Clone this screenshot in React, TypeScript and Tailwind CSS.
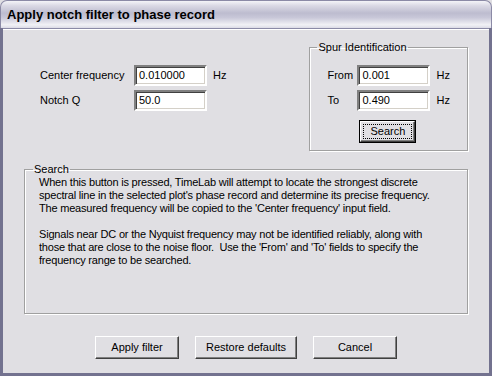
import React from "react";

const inputCls =
    "h-[21px] w-[73px] bg-white border-2 border-t-[#808080] border-l-[#808080] border-b-white border-r-white shadow-[inset_1px_1px_0_#404040,inset_-1px_-1px_0_#d4d0c8] px-[3px] flex items-center text-black";

const buttonCls =
    "h-[23px] bg-[#e0dfe3] border border-t-white border-l-white border-b-[#404040] border-r-[#404040] shadow-[inset_-1px_-1px_0_#808080] flex items-center justify-center text-black";

const etched =
    "border border-[#a0a0a0] shadow-[inset_1px_1px_0_#fff,1px_1px_0_#fff]";

const Field = ({ label, value, labelW }: { label: string; value: string; labelW: string }) => (
    <div className="flex items-center">
        <span className={labelW}>{label}</span>
        <div className={inputCls}>{value}</div>
        <span className="ml-[6px]">Hz</span>
    </div>
);

export default function App() {
    return (
        <div className="w-[492px] h-[376px] bg-[#e0dfe3] font-['Liberation_Sans',Arial,sans-serif] text-[11px] leading-[13px] text-black flex flex-col">
            {/* title bar */}
            <div className="h-[28px] rounded-t-[7px] border border-b-0 border-[#8b8aa6] bg-[linear-gradient(to_bottom,#f4f4f8_0%,#d9d8e4_18%,#bdbccf_45%,#c9c8d9_62%,#f1f1f5_88%,#dcdbe6_100%)] flex items-center pl-[6px] pb-[1px]">
                <span className="text-[13px] font-bold text-black">Apply notch filter to phase record</span>
            </div>
            {/* body */}
            <div className="flex-1 border-x-[3px] border-b-[3px] border-[#73728f] flex flex-col">
                <div className="flex-1 border-t border-[#8b8aa6] flex flex-col">
                    <div className="flex-1 border-t border-white flex flex-col">
                        {/* top area */}
                        <div className="flex h-[129px]">
                            <div className="ml-[37px] mt-[35px] flex flex-col gap-[4px]">
                                <div className="flex items-center">
                                    <span className="w-[94px]">Center frequency</span>
                                    <div className={inputCls}>0.010000</div>
                                    <span className="ml-[6px]">Hz</span>
                                </div>
                                <div className="flex items-center">
                                    <span className="w-[94px]">Notch Q</span>
                                    <div className={inputCls}>50.0</div>
                                </div>
                            </div>
                            <fieldset className={`ml-[83px] mt-[11px] w-[156px] h-[110px] ${etched} px-[17px]`}>
                                <legend className="ml-[-10px] px-[1px]">Spur Identification</legend>
                                <div className="mt-[11px] flex flex-col gap-[4px]">
                                    <Field label="From" value="0.001" labelW="w-[30px]" />
                                    <Field label="To" value="0.490" labelW="w-[30px]" />
                                </div>
                                <div className="mt-[9px] ml-[32px] w-[57px] h-[23px] border border-black flex">
                                    <div className="flex-1 border border-t-white border-l-white border-b-[#404040] border-r-[#404040] shadow-[inset_-1px_-1px_0_#808080] flex p-[2px]">
                                        <div className="flex-1 border border-dotted border-black flex items-center justify-center">Search</div>
                                    </div>
                                </div>
                            </fieldset>
                        </div>
                        {/* search group */}
                        <fieldset className={`ml-[21px] mr-[21px] mt-[4px] h-[151px] ${etched} pl-[14px] pr-[4px]`}>
                            <legend className="ml-[-6px] px-[1px]">Search</legend>
                            <p className="tracking-[-0.2px] whitespace-nowrap">
                                When this button is pressed, TimeLab will attempt to locate the strongest discrete<br />
                                spectral line in the selected plot's phase record and determine its precise frequency.<br />
                                The measured frequency will be copied to the 'Center frequency' input field.
                            </p>
                            <p className="mt-[13px] tracking-[-0.2px] whitespace-nowrap">
                                Signals near DC or the Nyquist frequency may not be identified reliably, along with<br />
                                those that are close to the noise floor.&nbsp; Use the 'From' and 'To' fields to specify the<br />
                                frequency range to be searched.
                            </p>
                        </fieldset>
                        {/* buttons */}
                        <div className="flex justify-center gap-[16px] mt-[22px]">
                            <div className={`${buttonCls} w-[84px]`}>Apply filter</div>
                            <div className={`${buttonCls} w-[102px]`}>Restore defaults</div>
                            <div className={`${buttonCls} w-[84px]`}>Cancel</div>
                        </div>
                    </div>
                </div>
            </div>
        </div>
    );
}
